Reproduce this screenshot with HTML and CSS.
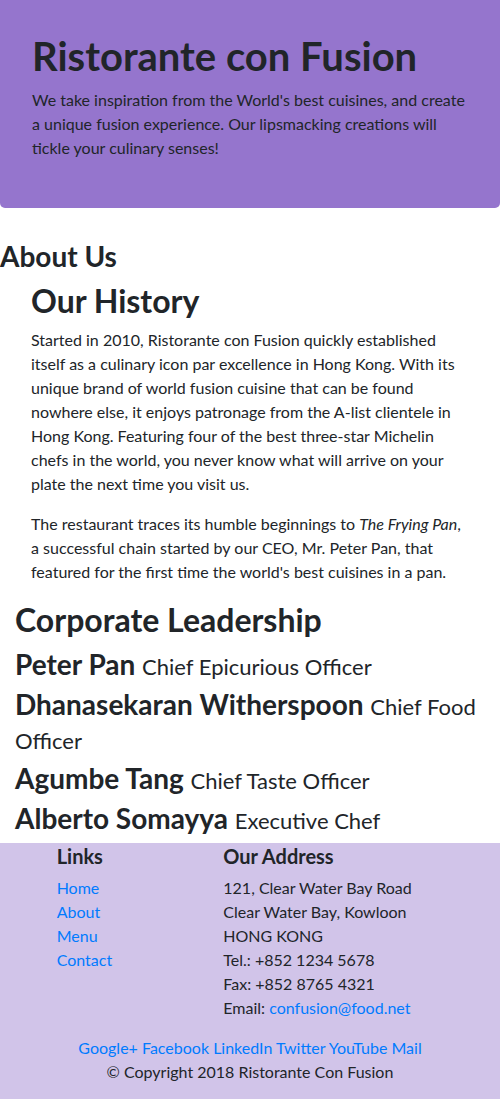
FILE: index.html
```html
<!DOCTYPE html>
<html lang="en">
<head>
<meta charset="utf-8">
<title>Ristorante con Fusion</title>
<link rel="stylesheet" href="styles.css">
</head>
<body>
<header class="jumbotron">
  <h1 class="brand">Ristorante con Fusion</h1>
  <p class="lead-text">We take inspiration from the World's best cuisines, and create a unique fusion experience. Our lipsmacking creations will tickle your culinary senses!</p>
</header>

<main class="content">
  <h3 class="about-title">About Us</h3>
  <section class="history">
    <h2 class="section-title">Our History</h2>
    <p>Started in 2010, Ristorante con Fusion quickly established itself as a culinary icon par excellence in Hong Kong. With its unique brand of world fusion cuisine that can be found nowhere else, it enjoys patronage from the A-list clientele in Hong Kong. Featuring four of the best three-star Michelin chefs in the world, you never know what will arrive on your plate the next time you visit us.</p>
    <p>The restaurant traces its humble beginnings to <em>The Frying Pan</em>, a successful chain started by our CEO, Mr. Peter Pan, that featured for the first time the world's best cuisines in a pan.</p>
  </section>
  <section class="leadership">
    <h2 class="section-title">Corporate Leadership</h2>
    <h3 class="leader">Peter Pan <small>Chief Epicurious Officer</small></h3>
    <h3 class="leader">Dhanasekaran Witherspoon <small>Chief Food Officer</small></h3>
    <h3 class="leader">Agumbe Tang <small>Chief Taste Officer</small></h3>
    <h3 class="leader">Alberto Somayya <small>Executive Chef</small></h3>
  </section>
</main>

<footer class="footer">
  <div class="footer-row">
    <div class="col-links">
      <h5 class="footer-title">Links</h5>
      <ul class="link-list">
        <li><a href="#">Home</a></li>
        <li><a href="#">About</a></li>
        <li><a href="#">Menu</a></li>
        <li><a href="#">Contact</a></li>
      </ul>
    </div>
    <div class="col-address">
      <h5 class="footer-title">Our Address</h5>
      <address class="address">
        121, Clear Water Bay Road<br>
        Clear Water Bay, Kowloon<br>
        HONG KONG<br>
        Tel.: +852 1234 5678<br>
        Fax: +852 8765 4321<br>
        Email: <a href="#">confusion@food.net</a>
      </address>
    </div>
  </div>
  <div class="social">
    <a href="#">Google+</a> <a href="#">Facebook</a> <a href="#">LinkedIn</a> <a href="#">Twitter</a> <a href="#">YouTube</a> <a href="#">Mail</a>
  </div>
  <p class="copyright">© Copyright 2018 Ristorante Con Fusion</p>
</footer>
</body>
</html>
```
FILE: styles.css
```css
* { box-sizing: border-box; }
html, body { margin: 0; padding: 0; }
body {
  font-family: Lato, "Liberation Sans", sans-serif;
  font-size: 16px;
  line-height: 24px;
  color: #212529;
  background: #fff;
}
a { color: #007bff; text-decoration: none; }
h1, h2, h3, h5 { font-weight: 700; line-height: 1.2; margin: 0 0 8px; color: #212529; }
p { margin: 0 0 16px; }

.jumbotron {
  background: #9575cd;
  padding: 32px;
  border-radius: 0 0 5px 5px;
  margin-bottom: 32px;
}
.brand { font-size: 40px; }
.lead-text { margin: 0 0 16px; }

.about-title { font-size: 28px; margin: 0 0 8px; }
.history { padding-left: 31px; padding-right: 31px; }
.section-title { font-size: 32px; }
.history p { margin-bottom: 16px; }
.leadership { padding: 1px 15px 2px; }
.leader { font-size: 28px; margin: 0 0 6px; line-height: 34px; }
.leader small { font-size: 22px; font-weight: 400; line-height: 1; }

.footer {
  background: #d1c4e9;
  padding: 0 0 15px;
}
.footer-row { display: flex; }
.col-links { margin-left: 41.67px; width: 166.67px; padding: 0 15px; }
.col-address { width: 291.67px; padding: 0 15px; }
.footer-title { font-size: 20px; line-height: 24px; margin: 1px 0 8px; }
.link-list { list-style: none; margin: 0; padding: 0; }
.address { font-style: normal; margin: 0 0 16px; }
.social { text-align: center; }
.copyright { text-align: center; margin: 0; }
```
